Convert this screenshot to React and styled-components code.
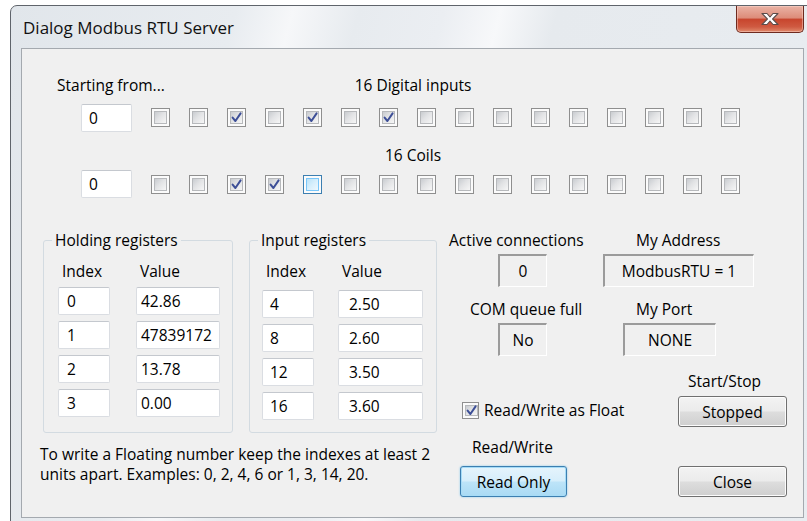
import React from 'react';
import styled, { createGlobalStyle } from 'styled-components';

const FONT = `"Open Sans", "Noto Sans", "Liberation Sans", sans-serif`;

const Global = createGlobalStyle`
  html, body {
    margin: 0;
    padding: 0;
    background: #ffffff;
    overflow: hidden;
  }
  body {
    font-family: ${FONT};
    font-size: 15.5px;
    color: #000;
  }
`;

/* ---------- window chrome ---------- */

const Window = styled.div`
  margin: 5px 0 0 10px;
  width: 805px;
  height: 530px;
  box-sizing: border-box;
  border: 1px solid #5f646b;
  border-radius: 7px 7px 0 0;
  padding: 0 10px;
  display: flex;
  flex-direction: column;
  background: linear-gradient(
    105deg,
    #e1e6eb 0%,
    #e8ecf0 24%,
    #f6f7f9 30%,
    #e7ebef 37%,
    #ebeef2 46%,
    #f7f8fa 52%,
    #e6eaee 58%,
    #e9edf1 100%
  );
`;

const TitleBar = styled.div`
  height: 42px;
  display: flex;
  justify-content: space-between;
  align-items: flex-start;
`;

const Title = styled.div`
  margin: 11px 0 0 2px;
  font-size: 17px;
  line-height: 22px;
  color: #111;
`;

const CloseBox = styled.div`
  width: 68px;
  height: 27px;
  box-sizing: border-box;
  border: 1px solid #6e2a1f;
  border-top: none;
  border-radius: 0 0 5px 5px;
  display: flex;
  align-items: center;
  justify-content: center;
  background: linear-gradient(
    180deg,
    #eab3a5 0%,
    #dd8d7a 45%,
    #c8462e 52%,
    #cf5a41 80%,
    #e08a6c 100%
  );
  box-shadow: inset 0 0 0 1px rgba(255, 220, 210, 0.45);
`;

const CloseGlyph = () => (
  <svg width="20" height="14" viewBox="0 0 20 14">
    <path
      d="M2 1.5 H7 L10 5 L13 1.5 H18 L12.6 7 L18 12.5 H13 L10 9 L7 12.5 H2 L7.4 7 Z"
      fill="#ffffff"
      stroke="#5b4c4a"
      strokeWidth="1.1"
      strokeLinejoin="round"
    />
  </svg>
);

const Client = styled.div`
  width: 783px;
  height: 470px;
  box-sizing: border-box;
  border: 1px solid #a4a9af;
  background: #f0f0f0;
  padding: 26px 0 0 18px;
  display: flex;
  flex-direction: column;
`;

/* ---------- bit rows ---------- */

const BitGrid = styled.div`
  margin-left: 17px;
  display: grid;
  grid-template-columns: 5px 51px repeat(16, 19px);
  grid-template-rows: 20px 45px 30px 28px;
  column-gap: 19px;
  align-items: center;
`;

const RowCaption = styled.div`
  grid-column: ${p => p.$span};
  line-height: 20px;
  white-space: nowrap;
  text-align: ${p => (p.$center ? 'center' : 'left')};
  padding-right: ${p => (p.$center ? '65px' : '0')};
`;

const Field = styled.div`
  grid-column: ${p => p.$col || 'auto'};
  height: 28px;
  box-sizing: border-box;
  background: #ffffff;
  border: 1px solid #dadde2;
  border-top-color: #c4c8ce;
  border-radius: 2px;
  padding-left: ${p => p.$pad || 6}px;
  line-height: 26px;
  white-space: nowrap;
  overflow: hidden;
`;

const CheckOuter = styled.span`
  width: ${p => p.$size}px;
  height: ${p => p.$size}px;
  box-sizing: border-box;
  border: 1px solid ${p => (p.$hot ? '#3c7fb1' : '#8f8f8f')};
  background: #fbfbfb;
  padding: 2px;
  display: flex;
  flex-shrink: 0;
`;

const CheckFace = styled.span`
  flex: 1;
  border: 1px solid ${p => (p.$hot ? '#79c6f9' : '#b7b9bc')};
  background: ${p =>
    p.$hot
      ? 'linear-gradient(135deg, #b9e2f8 0%, #d7effc 50%, #eef8fe 100%)'
      : 'linear-gradient(135deg, #c9ccd0 0%, #e2e3e5 45%, #f6f6f6 100%)'};
  display: flex;
  align-items: center;
  justify-content: center;
`;

const Tick = () => (
  <svg width="11" height="11" viewBox="0 0 11 11">
    <path
      d="M1.6 5.6 L4.4 9 L9.6 1.4"
      fill="none"
      stroke="#3d4f97"
      strokeWidth="2"
      strokeLinecap="round"
      strokeLinejoin="round"
    />
  </svg>
);

const Box = ({ on, hot, size = 19 }) => (
  <CheckOuter $hot={hot} $size={size}>
    <CheckFace $hot={hot}>{on ? <Tick /> : null}</CheckFace>
  </CheckOuter>
);

/* ---------- register groups ---------- */

const Middle = styled.div`
  margin-top: 32px;
  display: flex;
  gap: 12px;
`;

const LeftCol = styled.div`
  display: flex;
  flex-direction: column;
`;

const Groups = styled.div`
  margin-left: 3px;
  display: flex;
  gap: 16px;
`;

const Group = styled.fieldset`
  margin: 0;
  padding: 0;
  width: ${p => p.$w}px;
  box-sizing: border-box;
  border: 1px solid #d3dbe1;
  border-radius: 3px;
  min-inline-size: 0;
`;

const Legend = styled.legend`
  margin-left: 8px;
  padding: 0 3px;
  line-height: 20px;
`;

const RegGrid = styled.div`
  display: grid;
  grid-template-columns: 52px ${p => p.$valW}px;
  grid-template-rows: ${p => p.$headH}px;
  grid-auto-rows: 28px;
  column-gap: ${p => p.$gap}px;
  row-gap: 6px;
  padding: 11px 0 ${p => p.$bottom}px ${p => p.$left}px;
`;

const ColHead = styled.div`
  line-height: 20px;
  padding-left: 4px;
`;

const Note = styled.div`
  margin-top: 11px;
  line-height: 20px;
  white-space: nowrap;
`;

/* ---------- status panel ---------- */

const Panel = styled.div`
  display: grid;
  grid-template-columns: 154px 183px;
  grid-template-rows: 20px 37px 32px 37px 35px 36px 30px 40px;
  grid-template-areas:
    'actL addrL'
    'actV addrV'
    'comL portL'
    'comV portV'
    '.    ssL'
    'flt  ssB'
    'rwL  .'
    'rwB  close';
`;

const Caption = styled.div`
  grid-area: ${p => p.$area};
  align-self: end;
  margin-left: ${p => p.$x}px;
  line-height: 20px;
  white-space: nowrap;
`;

const Readout = styled.div`
  grid-area: ${p => p.$area};
  align-self: end;
  margin-left: ${p => p.$x}px;
  width: ${p => p.$w}px;
  height: 33px;
  box-sizing: border-box;
  border-style: solid;
  border-width: 2px 1px 1px 2px;
  border-color: #9b9b9b #ffffff #ffffff #9b9b9b;
  background: #f0f0f0;
  display: flex;
  align-items: center;
  justify-content: center;
  white-space: nowrap;
`;

const Button = styled.button`
  grid-area: ${p => p.$area};
  align-self: end;
  margin: 0 0 0 ${p => p.$x}px;
  width: ${p => p.$w}px;
  height: 31px;
  padding: 0;
  font-family: ${FONT};
  font-size: 15.5px;
  color: #000;
  border-radius: 3px;
  border: 1px solid ${p => (p.$primary ? '#3c7fb1' : '#707070')};
  background: ${p =>
    p.$primary
      ? 'linear-gradient(180deg, #e5f4fc 0%, #d6eefb 48%, #bde4f8 52%, #a9daf4 100%)'
      : 'linear-gradient(180deg, #f3f3f3 0%, #ebebeb 48%, #dddddd 52%, #cfcfcf 100%)'};
  box-shadow: ${p =>
    p.$primary
      ? 'inset 0 0 0 1px #a6dcf7, 0 0 2px #7cc4ec'
      : 'inset 0 0 0 1px #fcfcfc'};
`;

const FloatOption = styled.div`
  grid-area: flt;
  align-self: start;
  margin: 8px 0 0 13px;
  display: flex;
  align-items: center;
  gap: 5px;
  white-space: nowrap;
`;

const inputs = [0, 0, 1, 0, 1, 0, 1, 0, 0, 0, 0, 0, 0, 0, 0, 0];
const coils = [0, 0, 1, 1, 0, 0, 0, 0, 0, 0, 0, 0, 0, 0, 0, 0];
const hotCoil = 4;

const holding = [
  ['0', '42.86'],
  ['1', '47839172'],
  ['2', '13.78'],
  ['3', '0.00'],
];
const inputRegs = [
  ['4', '2.50'],
  ['8', '2.60'],
  ['12', '3.50'],
  ['16', '3.60'],
];

export default function App() {
  return (
    <>
      <Global />
      <Window>
        <TitleBar>
          <Title>Dialog Modbus RTU Server</Title>
          <CloseBox>
            <CloseGlyph />
          </CloseBox>
        </TitleBar>
        <Client>
          <BitGrid>
            <RowCaption $span="1 / span 2">Starting from...</RowCaption>
            <RowCaption $span="3 / -1" $center>16 Digital inputs</RowCaption>

            <Field $col="2" $pad={7}>0</Field>
            {inputs.map((v, i) => (
              <Box key={'i' + i} on={v} />
            ))}

            <RowCaption $span="3 / -1" $center>16 Coils</RowCaption>

            <Field $col="2" $pad={7}>0</Field>
            {coils.map((v, i) => (
              <Box key={'c' + i} on={v} hot={i === hotCoil} />
            ))}
          </BitGrid>

          <Middle>
            <LeftCol>
              <Groups>
                <Group $w={190}>
                  <Legend>Holding registers</Legend>
                  <RegGrid $valW={84} $gap={26} $left={14} $headH={20} $bottom={15}>
                    <ColHead>Index</ColHead>
                    <ColHead>Value</ColHead>
                    {holding.map(([idx, val]) => (
                      <React.Fragment key={idx}>
                        <Field $pad={8}>{idx}</Field>
                        <Field $pad={4}>{val}</Field>
                      </React.Fragment>
                    ))}
                  </RegGrid>
                </Group>
                <Group $w={188}>
                  <Legend>Input registers</Legend>
                  <RegGrid $valW={85} $gap={24} $left={12} $headH={23} $bottom={12}>
                    <ColHead>Index</ColHead>
                    <ColHead>Value</ColHead>
                    {inputRegs.map(([idx, val]) => (
                      <React.Fragment key={idx}>
                        <Field $pad={7}>{idx}</Field>
                        <Field $pad={10}>{val}</Field>
                      </React.Fragment>
                    ))}
                  </RegGrid>
                </Group>
              </Groups>
              <Note>
                To write a Floating number keep the indexes at least 2
                <br />
                units apart. Examples: 0, 2, 4, 6 or 1, 3, 14, 20.
              </Note>
            </LeftCol>

            <Panel>
              <Caption $area="actL" $x={0}>Active connections</Caption>
              <Readout $area="actV" $x={49} $w={49}>0</Readout>
              <Caption $area="addrL" $x={33}>My Address</Caption>
              <Readout $area="addrV" $x={0} $w={151}>ModbusRTU = 1</Readout>

              <Caption $area="comL" $x={21}>COM queue full</Caption>
              <Readout $area="comV" $x={49} $w={49}>No</Readout>
              <Caption $area="portL" $x={33}>My Port</Caption>
              <Readout $area="portV" $x={20} $w={93}>NONE</Readout>

              <Caption $area="ssL" $x={85}>Start/Stop</Caption>
              <FloatOption>
                <Box on size={17} />
                <span>Read/Write as Float</span>
              </FloatOption>
              <Button $area="ssB" $x={75} $w={109}>Stopped</Button>

              <Caption $area="rwL" $x={23}>Read/Write</Caption>
              <Button $area="rwB" $x={11} $w={107} $primary>Read Only</Button>
              <Button $area="close" $x={75} $w={109}>Close</Button>
            </Panel>
          </Middle>
        </Client>
      </Window>
    </>
  );
}
